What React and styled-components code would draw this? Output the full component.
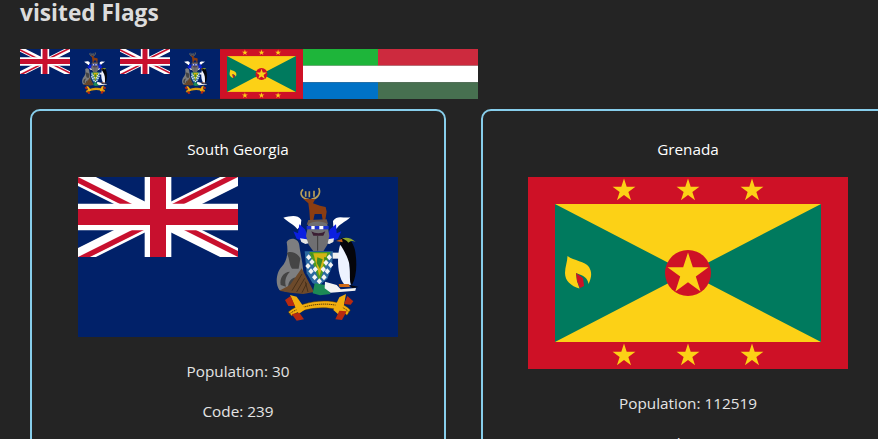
import React from "react";
import styled, { createGlobalStyle } from "styled-components";

const Global = createGlobalStyle`
  html, body { margin: 0; padding: 0; background: #242424; overflow: hidden; }
  body { font-family: "Open Sans", "Noto Sans", sans-serif; color: rgba(255,255,255,.87); }
`;
const Page = styled.div`
  width: 878px; height: 439px; overflow: hidden; box-sizing: border-box; padding-left: 20px;
`;
const Heading = styled.h2`
  margin: 0; height: 49px; font-size: 22.7px; line-height: 26px; font-weight: 700; color: #dcdcdc;
`;
const Strip = styled.div`
  display: flex; height: 50px;
  svg { display: block; height: 50px; }
`;
const Cards = styled.div`
  display: flex; gap: 35px; margin: 10px 0 0 10px; width: 900px;
`;
const Card = styled.article`
  box-sizing: border-box; flex: 0 0 ${(p) => p.$width}px; height: 400px; border: 2px solid #87ceeb; border-radius: 10px;
  display: flex; flex-direction: column; align-items: center; padding-top: 28px; font-size: 15.3px; line-height: 20px;
`;
const Name = styled.div`
  color: #fff; margin-bottom: 18px;
`;
const Art = styled.div`
  width: 320px; svg { display: block; width: 320px; height: auto; }
`;
const Stat = styled.p`
  margin: 24px 0 0; color: #e4e4e4;
  & + & { margin-top: 20px; }
`;

const star = (cx, cy, r) => {
  const p = [];
  for (let i = 0; i < 10; i++) {
    const a = -Math.PI / 2 + (i * Math.PI) / 5;
    const q = i % 2 ? r * 0.382 : r;
    p.push(`${(cx + q * Math.cos(a)).toFixed(2)},${(cy + q * Math.sin(a)).toFixed(2)}`);
  }
  return p.join(" ");
};

const DIAMONDS = [
  [206, 262], [204, 288], [216, 276], [213, 304], [226, 298], [224, 322], [238, 334],
  [268, 262], [272, 285], [258, 278], [262, 304], [250, 298], [252, 322],
];

const Crest = () => (
  <g transform="translate(162 -7) scale(.33333)">
    {/* antlers */}
    <g fill="none" stroke="#b89f58" strokeWidth="5">
      <path d="M189 58C177 70 185 86 206 88M236 54C244 70 232 86 214 88" />
      <path d="M197 64v16M208 64v18M222 62v18" />
    </g>
    {/* stag */}
    <path d="M190 87L226 87 219 100 240 107 257 111 260 125 256 150 248 150 245 132 224 132 220 150 210 150 208 122 205 100Z" fill="#8a3d12" />
    <path d="M205 150L260 148 264 162 200 164Z" fill="#6a564c" />
    {/* wings */}
    <path d="M130 143C150 139 172 132 184 150L182 168 172 178C166 166 150 160 130 143Z" fill="#fff" />
    <path d="M331 142C311 146 291 133 279 153L280 170 290 176C296 164 316 156 331 142Z" fill="#fff" />
    {/* mantling */}
    <path d="M178 163L195 178 206 205 190 214 170 206 160 184 174 190Z" fill="#0b1fe0" />
    <path d="M288 163L270 178 258 205 274 214 294 206 304 184 290 190Z" fill="#0b1fe0" />
    <path d="M180 205L200 208 212 218 196 222 184 216ZM282 205L264 208 252 218 268 222 280 216Z" fill="#e6e6e6" />
    {/* helmet */}
    <path d="M205 163C218 152 250 152 262 163L268 198 262 224 250 244 220 244 206 224 198 198Z" fill="#6f6f72" />
    <path d="M200 168H266V178H200Z" fill="#1a2fd0" />
    <path d="M214 168H224V178H214ZM238 168H250V178H238Z" fill="#fff" />
    <path d="M214 184C225 192 245 192 256 184L250 197H220Z" fill="#3b1e33" />
    <path d="M233 198V242" stroke="#3a3a3a" strokeWidth="3" />
    {/* seal */}
    <path d="M140 216C150 200 176 204 178 226 180 250 190 280 190 312L188 345 140 365 118 360C104 340 110 305 125 290 140 275 146 250 140 216Z" fill="#7d7e80" />
    <path d="M140 250C150 240 175 250 181 266L176 296 156 296C146 282 150 266 140 250Z" fill="#454545" />
    <path d="M122 345C118 325 130 305 150 305 140 315 132 330 138 350ZM145 360C142 340 150 325 168 322 158 335 158 345 165 354Z" fill="#444" />
    {/* tussock */}
    <path d="M118 362L150 345 185 295 222 366 190 372 150 368Z" fill="#6d4a2b" />
    <path d="M156 362L186 312M170 366L194 325M186 368L200 340M204 366L196 335" stroke="#3e2a16" strokeWidth="2.5" fill="none" />
    {/* shield */}
    <path d="M194 244H279L276 290 262 326 238 347 218 340 200 310Z" fill="#2b6aa0" />
    <path d="M208 246H272L238 336Z" fill="#4c9a24" />
    <path d="M220 250H262L238 318Z" fill="#d4b414" />
    <path d="M232 262L248 268 240 296 230 280ZM210 250L222 262 216 250ZM254 284L262 262 252 262Z" fill="#3f8a1e" />
    <path d="M278 248H300V266H278Z" fill="#f0f0f0" />
    {DIAMONDS.map(([x, y]) => (
      <path key={`${x}-${y}`} d={`M${x} ${y - 9}L${x + 8} ${y}L${x} ${y + 9}L${x - 8} ${y}Z`} fill="#f4f4f4" />
    ))}
    {/* grass */}
    <path d="M224 340L256 345 272 372 240 376 218 370Z" fill="#1c8a55" />
    {/* snow */}
    <path d="M255 335L290 345 302 358 348 354 346 362 272 368 254 355Z" fill="#f3f3f3" />
    {/* penguin */}
    <path d="M300 226C290 260 292 320 312 342L332 345 326 226Z" fill="#eef3ff" />
    <path d="M303 205C320 198 338 210 345 240 352 280 350 320 336 345 326 338 332 310 328 282 322 256 308 236 300 222Z" fill="#05050a" />
    <path d="M288 213L306 207 308 217Z" fill="#c5601b" />
    <path d="M306 205C320 200 335 204 347 216 338 212 332 212 325 218 320 211 312 208 306 205Z" fill="#8ea52c" />
    <path d="M296 342H326L330 351H298Z" fill="#cf6a18" />
    <path d="M330 345L356 351 336 354Z" fill="#05050a" />
    {/* scroll */}
    <path d="M145 426C178 394 292 374 331 420L321 436C290 402 190 410 155 438Z" fill="#f2ae0f" stroke="#4a3208" strokeWidth="1.5" />
    <path d="M146 428C180 398 290 380 326 422" fill="none" stroke="#5a3d08" strokeWidth="3" strokeDasharray="4 2" transform="translate(1 5)" />
    <path d="M150 375L170 380 196 418 176 432 164 408Z" fill="#f2ae0f" />
    <path d="M135 390L152 378 165 408 145 408Z" fill="#b82a10" />
    <path d="M155 432L178 428 192 448 170 452Z" fill="#b82a10" />
    <path d="M318 372L298 382 280 420 298 436 312 404Z" fill="#f2ae0f" />
    <path d="M340 394L322 378 312 402 332 404Z" fill="#b82a10" />
    <path d="M320 424L298 422 286 448 306 450Z" fill="#b82a10" />
  </g>
);

const Union = () => (
  <g transform="scale(2.6667)">
    <clipPath id="ujOuter"><path d="M0 0v30h60V0z" /></clipPath>
    <clipPath id="ujInner"><path d="M30 15h30v15zv15H0zH0V0zV0h30z" /></clipPath>
    <g clipPath="url(#ujOuter)">
      <path d="M0 0L60 30M60 0L0 30" stroke="#fff" strokeWidth="6" />
      <path d="M0 0L60 30M60 0L0 30" clipPath="url(#ujInner)" stroke="#c8102e" strokeWidth="4" />
      <path d="M30 0v30M0 15h60" stroke="#fff" strokeWidth="10" />
      <path d="M30 0v30M0 15h60" stroke="#c8102e" strokeWidth="6" />
    </g>
  </g>
);

const SouthGeorgia = () => (
  <svg viewBox="0 0 320 160" width="100"><rect width="320" height="160" fill="#012169" /><Union /><Crest /></svg>
);

const Grenada = () => (
  <svg viewBox="0 0 320 192" width="83">
    <rect width="320" height="192" fill="#ce1126" />
    <rect x="27" y="27" width="266" height="138" fill="#fcd116" />
    <path d="M27 27L160 96L27 165zM293 27L160 96L293 165z" fill="#007a5e" />
    <circle cx="160" cy="96" r="23" fill="#ce1126" />
    <polygon points={star(160, 97, 21.5)} fill="#fcd116" />
    {[96, 160, 224].map((x) => (
      <React.Fragment key={x}>
        <polygon points={star(x, 13.5, 12)} fill="#fcd116" />
        <polygon points={star(x, 178.5, 12)} fill="#fcd116" />
      </React.Fragment>
    ))}
    <path d="M39.5 79C39.5 84 37 90 37 96 37 104 43 109 51.5 111.5L49 104 48 96 53 98C58 100 60 103 60.5 107 64 100 64 95 61 90 57 84 46 84 39.5 79Z" fill="#fcd116" />
    <path d="M48 96L55 101 56 109 52 111 49 104Z" fill="#ce1126" />
  </svg>
);

const Tricolor = ({ width, colors }) => (
  <svg viewBox="0 0 3 3" width={width} preserveAspectRatio="none">
    {colors.map((c, i) => <rect key={c} y={i} width="3" height="1" fill={c} />)}
  </svg>
);

export default function App() {
  return (
    <Page>
      <Global />
      <Heading>visited Flags</Heading>
      <Strip>
        <SouthGeorgia />
        <SouthGeorgia />
        <Grenada />
        <Tricolor width={75} colors={["#1eb53a", "#ffffff", "#0072c6"]} />
        <Tricolor width={100} colors={["#cd2a3e", "#ffffff", "#477050"]} />
      </Strip>
      <Cards>
        <Card $width={416}>
          <Name>South Georgia</Name>
          <Art><SouthGeorgia /></Art>
          <Stat>Population: 30</Stat>
          <Stat>Code: 239</Stat>
        </Card>
        <Card $width={414}>
          <Name>Grenada</Name>
          <Art><Grenada /></Art>
          <Stat>Population: 112519</Stat>
          <Stat>Code: 308</Stat>
        </Card>
      </Cards>
    </Page>
  );
}
